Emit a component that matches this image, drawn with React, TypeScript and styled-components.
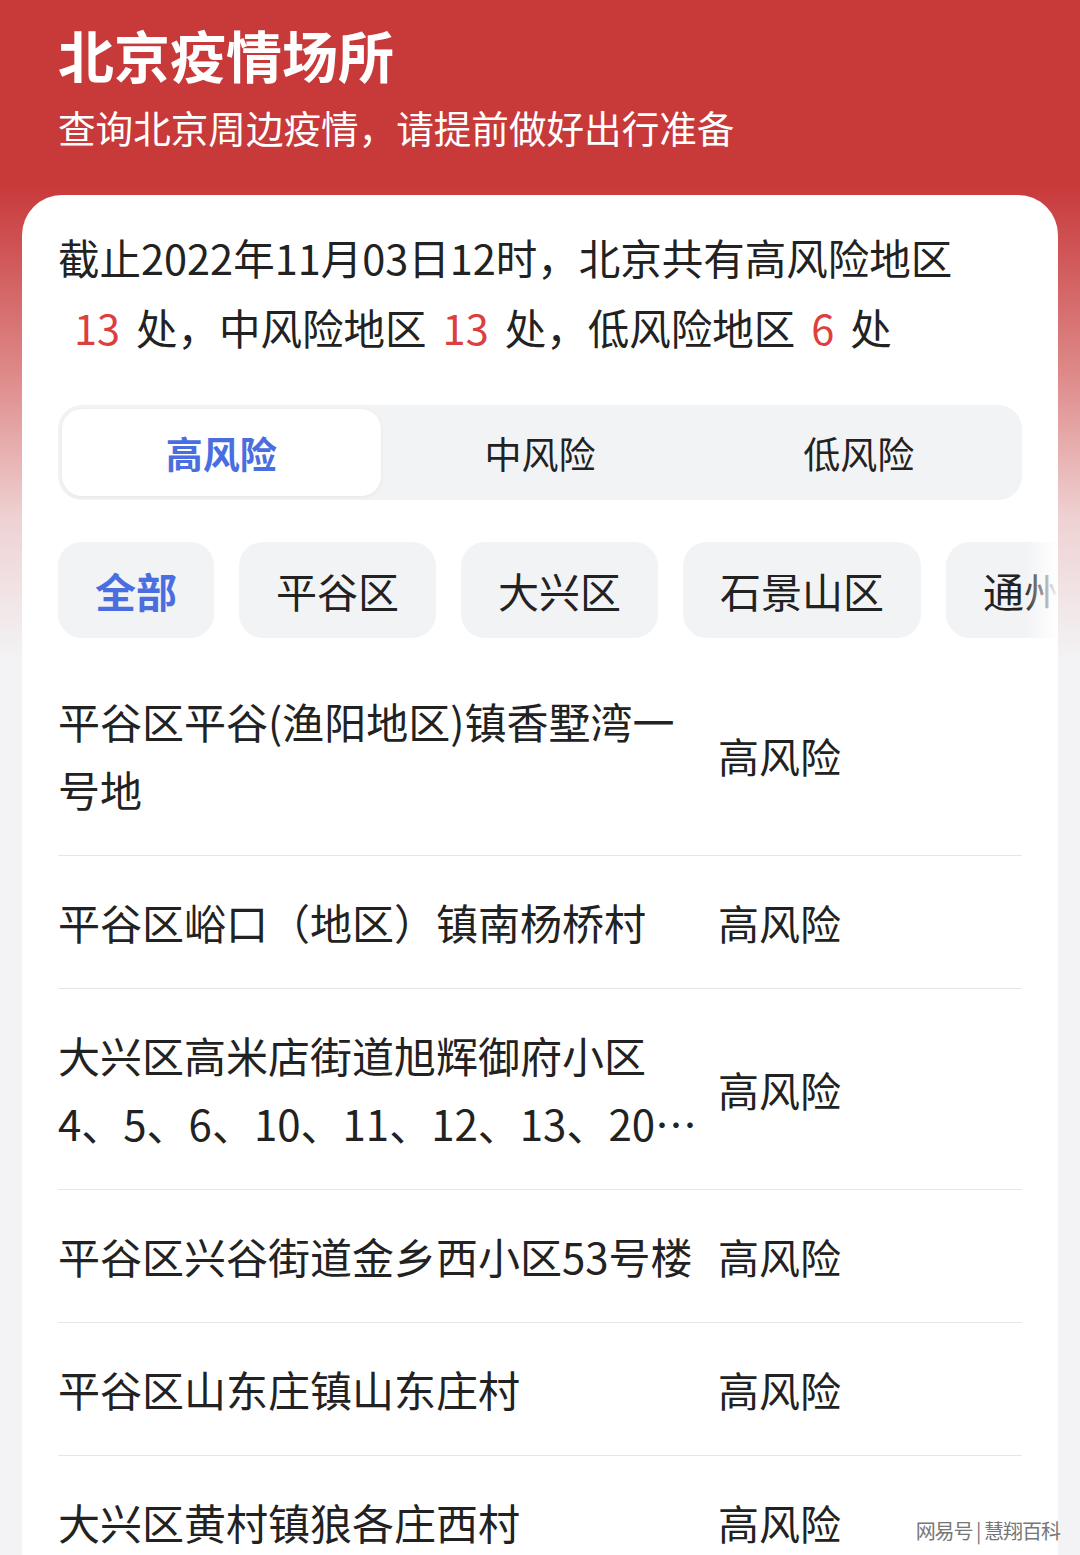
import React, { useState } from 'react';
import styled, { createGlobalStyle } from 'styled-components';

const GlobalStyle = createGlobalStyle`
    html, body {
        margin: 0;
        padding: 0;
    }
    body {
        font-family: "Noto Sans CJK SC", "Noto Sans", sans-serif;
        color: #222;
    }
`;

const Page = styled.div`
    position: relative;
    width: 1080px;
    height: 1555px;
    overflow: hidden;
    background: linear-gradient(180deg, #c8393a 0, #c8393a 185px, #df8c8c 380px, #efd2d3 520px, #f3f3f5 660px, #f3f3f5 100%);
`;

const Header = styled.div`
    padding: 17px 58px 0;
    color: #fff;
`;

const Title = styled.h1`
    margin: 0;
    font-size: 56px;
    font-weight: 700;
    line-height: 73px;
`;

const SubTitle = styled.div`
    margin-top: 11px;
    font-size: 37.6px;
    line-height: 52px;
`;

const Card = styled.div`
    margin: 42px 22px 0;
    background: #fff;
    border-radius: 40px 40px 0 0;
    padding: 27px 36px 0;
    min-height: 1400px;
`;

const Summary = styled.div`
    font-size: 41.5px;
    line-height: 70px;
    color: #222;
`;

const Num = styled.span`
    color: #dc3f3d;
    margin: 0 16px;
`;

const Tabs = styled.div`
    margin-top: 43px;
    display: grid;
    grid-template-columns: repeat(3, 1fr);
    background: #f2f3f5;
    border-radius: 24px;
    padding: 4px;
`;

const Tab = styled.div<{ $active?: boolean }>`
    height: 87px;
    display: flex;
    align-items: center;
    justify-content: center;
    font-size: 37px;
    border-radius: 20px;
    background: ${p => p.$active ? '#fff' : 'transparent'};
    box-shadow: ${p => p.$active ? '0 1px 4px rgba(0,0,0,0.06)' : 'none'};
    color: ${p => p.$active ? '#4a6ee0' : '#222'};
    font-weight: ${p => p.$active ? 700 : 400};
`;

const ChipRow = styled.div`
    position: relative;
    margin: 42px -36px 0 0;
    display: flex;
    gap: 25px;
    overflow: hidden;
    &::after {
        content: '';
        position: absolute;
        right: 0;
        top: 0;
        bottom: 0;
        width: 34px;
        background: linear-gradient(90deg, rgba(255,255,255,0), #fff);
    }
`;

const Chip = styled.div<{ $active?: boolean }>`
    flex: 0 0 auto;
    height: 96px;
    padding: 0 37px;
    display: flex;
    align-items: center;
    border-radius: 24px;
    background: #f2f3f5;
    font-size: 41px;
    color: ${p => p.$active ? '#4a6ee0' : '#222'};
    font-weight: ${p => p.$active ? 700 : 400};
`;

const List = styled.div`
    margin-top: 17px;
`;

const Row = styled.div`
    display: flex;
    align-items: center;
    gap: 20px;
    padding: 32px 0;
    border-bottom: 1px solid #e6e6e6;
`;

const Name = styled.div`
    flex: 0 0 640px;
    font-size: 42px;
    line-height: 68px;
    white-space: pre-line;
    display: -webkit-box;
    -webkit-line-clamp: 2;
    -webkit-box-orient: vertical;
    overflow: hidden;
`;

const Risk = styled.div`
    font-size: 41px;
    line-height: 68px;
`;

const Watermark = styled.div`
    position: absolute;
    right: 20px;
    bottom: 10px;
    font-size: 20px;
    color: #777;
    text-shadow: 0 0 2px #fff;
    letter-spacing: -1px;
`;

const tabs = ['高风险', '中风险', '低风险'];
const areas = ['全部', '平谷区', '大兴区', '石景山区', '通州区', '朝阳区'];

const places = [
    '平谷区平谷(渔阳地区)镇香墅湾一\n号地',
    '平谷区峪口（地区）镇南杨桥村',
    '大兴区高米店街道旭辉御府小区\n4、5、6、10、11、12、13、20号楼',
    '平谷区兴谷街道金乡西小区53号楼',
    '平谷区山东庄镇山东庄村',
    '大兴区黄村镇狼各庄西村',
];

function App() {
    const [tab, setTab] = useState(0);
    const [area, setArea] = useState(0);

    return (
        <Page>
            <GlobalStyle />
            <Header>
                <Title>北京疫情场所</Title>
                <SubTitle>查询北京周边疫情，请提前做好出行准备</SubTitle>
            </Header>
            <Card>
                <Summary>
                    截止2022年11月03日12时，北京共有高风险地区<br />
                    <Num>13</Num>处，中风险地区<Num>13</Num>处，低风险地区<Num>6</Num>处
                </Summary>
                <Tabs>
                    {tabs.map((t, i) => (
                        <Tab key={t} $active={tab === i} onClick={() => setTab(i)}>{t}</Tab>
                    ))}
                </Tabs>
                <ChipRow>
                    {areas.map((a, i) => (
                        <Chip key={a} $active={area === i} onClick={() => setArea(i)}>{a}</Chip>
                    ))}
                </ChipRow>
                <List>
                    {places.map((p, i) => (
                        <Row key={i}>
                            <Name>{p}</Name>
                            <Risk>高风险</Risk>
                        </Row>
                    ))}
                </List>
            </Card>
            <Watermark>网易号 | 慧翔百科</Watermark>
        </Page>
    );
}

export default App;
